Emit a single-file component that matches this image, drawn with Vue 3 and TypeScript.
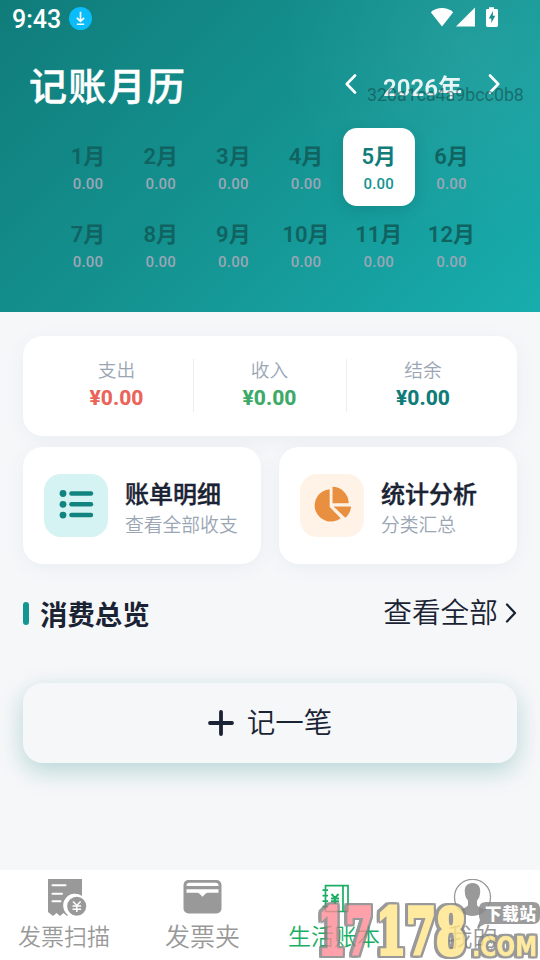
<script setup lang="ts">
interface Month {
  label: string
  amount: string
}

interface Total {
  label: string
  value: string
  tone: 'expense' | 'income' | 'balance'
}

const selected = 5
const months: Month[] = Array.from({ length: 12 }, (_, i) => ({
  label: `${i + 1}月`,
  amount: '0.00',
}))

const totals: Total[] = [
  { label: '支出', value: '¥0.00', tone: 'expense' },
  { label: '收入', value: '¥0.00', tone: 'income' },
  { label: '结余', value: '¥0.00', tone: 'balance' },
]
</script>

<template>
  <div class="screen">
    <header class="hero">
      <div class="status">
        <span class="clock">9:43</span>
        <svg class="download" viewBox="0 0 24 24">
          <circle cx="12" cy="12" r="12" fill="#0bbcfb" />
          <path d="M12 5v10M8.2 11.3 12 15l3.8-3.7M8.2 18h7.6" fill="none" stroke="#fff" stroke-width="1.7" />
        </svg>
        <svg class="signals" viewBox="0 0 70 22" fill="#fff">
          <path d="M.8 5.2C7.400-.4 16.600-.4 23.200 5.200L12 19.600Z" />
          <path d="M26 19.500 45 .6v18.900Z" />
          <path d="M59 .2h5v1.700h2.600a1.400 1.400 0 0 1 1.400 1.400v15.300a1.400 1.400 0 0 1-1.400 1.400H57.400a1.400 1.400 0 0 1-1.400-1.400V3.300A1.400 1.400 0 0 1 57.400 1.900H59Z" />
          <path d="m63 4-4.200 7.500h2.500V16l4-7.200h-2.500Z" fill="#188e8d" />
        </svg>
      </div>
      <div class="heading">
        <h1>记账月历</h1>
        <div class="year">
          <svg class="arrow" viewBox="0 0 12 20"><path d="m10 1.500-8.200 8.500 8.200 8.500" /></svg>
          <span class="year-label">2026年</span>
          <svg class="arrow" viewBox="0 0 12 20"><path d="m2 1.500 8.200 8.500L2 18.500" /></svg>
          <span class="device-id">320a1ca4a9bcc0b8</span>
        </div>
      </div>
      <div class="months">
        <div v-for="(m, i) in months" :key="m.label" class="month" :class="{ active: i + 1 === selected }">
          <span class="month-name">{{ m.label }}</span>
          <span class="month-amount">{{ m.amount }}</span>
        </div>
      </div>
    </header>

    <main class="content">
      <section class="totals card">
        <div v-for="t in totals" :key="t.label" class="total">
          <span class="total-label">{{ t.label }}</span>
          <span class="total-value" :class="t.tone">{{ t.value }}</span>
        </div>
      </section>

      <section class="shortcuts">
        <div class="shortcut card">
          <div class="tile mint">
            <svg viewBox="0 0 64 64" fill="#128480">
              <circle cx="19" cy="19.500" r="3.400" />
              <circle cx="19" cy="30.300" r="3.400" />
              <circle cx="19" cy="41.100" r="3.400" />
              <rect x="25.200" y="17.200" width="24" height="4.500" rx="2.200" />
              <rect x="25.200" y="28" width="24" height="4.500" rx="2.200" />
              <rect x="25.200" y="38.800" width="24" height="4.500" rx="2.200" />
            </svg>
          </div>
          <div class="shortcut-text">
            <b>账单明细</b>
            <span>查看全部收支</span>
          </div>
        </div>
        <div class="shortcut card">
          <div class="tile peach">
            <svg viewBox="0 0 64 64" fill="#e89040">
              <path d="M29.700 15.200V33L40.700 44.200A16.200 16.200 0 1 1 29.700 15.200Z" />
              <path d="M32.500 12.800A16.300 16.300 0 0 1 48.700 29.200H32.500Z" />
              <path d="M33.500 32.400H51A16 16 0 0 1 45.300 43.800Z" />
            </svg>
          </div>
          <div class="shortcut-text">
            <b>统计分析</b>
            <span>分类汇总</span>
          </div>
        </div>
      </section>

      <section class="overview">
        <h2><span>消费总览</span></h2>
        <div class="more">
          <span>查看全部</span>
          <svg viewBox="0 0 12 20"><path d="m2 1.500 8 8.500-8 8.500" /></svg>
        </div>
      </section>

      <div class="add">
        <svg viewBox="0 0 26 26"><path d="M13 2v22M2 13h22" /></svg>
        <span>记一笔</span>
      </div>
    </main>

    <nav class="tabs">
      <div class="tab long">
        <svg viewBox="0 0 42 38">
          <path d="M1 0h34v17a10.500 10.500 0 0 0-14 19l-1 1-3.500-3-3.500 3-3.500-3L6 37l-5-4Z" fill="#999" />
          <path d="M5.500 6.300h13M5.500 14.800h9.500M5.500 22.300h8" fill="none" stroke="#fff" stroke-width="2" stroke-linecap="round" />
          <circle cx="29.700" cy="27.300" r="9.500" fill="#999" />
          <path d="m26 22.500 3.800 4 3.800-4M25.500 27h8.600M25.500 30.200h8.600M29.800 27v6" fill="none" stroke="#fff" stroke-width="1.500" />
        </svg>
        <span>发票扫描</span>
      </div>
      <div class="tab">
        <svg viewBox="0 0 42 38">
          <rect x="1.500" y="1" width="38" height="33.500" rx="5" fill="#999" />
          <path d="M4.500 7V6.500q0-2.700 3-2.700h26q3 0 3 2.700V7ZM4.500 10.300h32v3.500H25.500q-1.500 0-2.500 1.500L20.500 17.700l-2.500-2.400q-1-1.500-2.500-1.500h-11Z" fill="#fff" />
        </svg>
        <span>发票夹</span>
      </div>
      <div class="tab long current">
        <svg viewBox="0 0 42 38" fill="none" stroke="#1aae64" stroke-width="1.700">
          <path d="M8.500 6.700h22.500v25.800h-22.500ZM26 6.700v25.800M5.500 11.200h5.500M5.500 16.700h5.500M5.500 22.200h5.500M5.500 27.700h5.500" />
          <path d="m14.500 15 3.500 4 3.500-4M14 19.500h8M14 22.300h8M18 19v6" stroke-width="1.900" />
        </svg>
        <span>生活账本</span>
      </div>
      <div class="tab">
        <svg viewBox="0 0 42 38">
          <circle cx="20.500" cy="18.300" r="18" fill="#fff" stroke="#999" stroke-width="1.300" />
          <path d="M20.500 4c5.500 0 8 3.500 7.700 9-.2 4-1.500 7-3.200 8.500v4.500q1 2.500 8.500 4.700Q27.500 36.300 20.500 36.300T7.500 30.700q7.500-2.200 8.500-4.700v-4.500c-1.700-1.500-3-4.500-3.200-8.500C12.500 7.500 15 4 20.500 4Z" fill="#999" />
        </svg>
        <span>我的</span>
      </div>
    </nav>

    <svg class="stamp" viewBox="0 0 226 62">
      <g class="digits">
        <text class="pink" x="4" y="56" textLength="55" lengthAdjust="spacingAndGlyphs">17</text>
        <text class="yellow" x="62" y="56" textLength="90" lengthAdjust="spacingAndGlyphs">178</text>
      </g>
      <g class="domain">
        <text class="yellow" x="158" y="58" textLength="65" lengthAdjust="spacingAndGlyphs">.COM</text>
      </g>
      <path class="bubble" d="M172 4h47q7 0 7 7v8q0 7-7 7h-48l-8 4 3-8q-1-2-1-4v-7q0-7 7-7Z" />
      <text class="site" x="171" y="22" textLength="51">下载站</text>
    </svg>
  </div>
</template>

<style>
body {
  margin: 0;
}
</style>

<style scoped>
.screen {
  position: relative;
  display: flex;
  flex-direction: column;
  width: 540px;
  height: 960px;
  overflow: hidden;
  background: #f6f7f9;
  color: #1a2333;
  font-family: Roboto, "Noto Sans CJK SC", sans-serif;
}
svg {
  display: block;
  flex: none;
}
.hero {
  box-sizing: border-box;
  height: 312px;
  flex: none;
  background:
    radial-gradient(circle at 470px 50px, rgba(255, 255, 255, 0.06), transparent 190px),
    linear-gradient(135deg, #107c7a 0%, #149391 50%, #18adae 100%);
}
.status {
  display: flex;
  align-items: center;
  height: 38px;
  padding: 0 40px 0 12px;
  color: #fff;
}
.clock {
  font-size: 25px;
  font-weight: 500;
}
.download {
  width: 23px;
  height: 23px;
  margin: -1px 0 0 8px;
}
.signals {
  width: 70px;
  height: 22px;
  margin: -2px 0 0 auto;
}
.heading {
  display: flex;
  align-items: center;
  justify-content: space-between;
  height: 90px;
  padding: 0 40px 0 29px;
}
h1 {
  margin: 8px 0 0;
  color: #fff;
  font-size: 38px;
  font-weight: 500;
  line-height: 48px;
  letter-spacing: 1.3px;
  -webkit-text-stroke: 0.5px #fff;
}
.year {
  position: relative;
  display: flex;
  align-items: center;
  width: 155px;
  margin-top: 2px;
  justify-content: space-between;
  color: #fff;
}
.year-label {
  margin-top: 7px;
  font-size: 24px;
  font-weight: 600;
  line-height: 32px;
  opacity: 0.9;
}
.arrow {
  width: 12px;
  height: 20px;
}
.arrow path {
  fill: none;
  stroke: #fff;
  stroke-width: 2.6;
  stroke-linecap: round;
  stroke-linejoin: round;
}
.device-id {
  position: absolute;
  left: 22px;
  top: 19px;
  color: rgba(20, 65, 65, 0.55);
  font-size: 17.800px;
  line-height: 22px;
  white-space: nowrap;
}
.months {
  display: grid;
  grid-template-columns: repeat(6, 72px);
  grid-auto-rows: 77.500px;
  column-gap: 0.7px;
  padding-left: 52px;
}
.month {
  display: flex;
  flex-direction: column;
  align-items: center;
  box-sizing: border-box;
  padding-top: 13px;
  border-radius: 14px;
}
.month-name {
  color: #106361;
  font-size: 22px;
  font-weight: 600;
  line-height: 32px;
}
.month-amount {
  margin-top: 1px;
  color: #9ba6b5;
  font-size: 15px;
  font-weight: 500;
  line-height: 20px;
  letter-spacing: 0.2px;
}
.active {
  background: #fff;
  box-shadow: 0 4px 14px rgba(0, 60, 60, 0.16);
}
.active .month-name {
  color: #107d7a;
}
.active .month-amount {
  color: #149391;
}
.content {
  flex: 1;
  padding: 23.500px 23px 0;
}
.card {
  border-radius: 20px;
  background: #fff;
  box-shadow: 0 4px 20px rgba(16, 100, 130, 0.055);
}
.totals {
  display: grid;
  grid-template-columns: repeat(3, 153px);
  justify-content: center;
  align-items: center;
  height: 100px;
}
.total {
  display: flex;
  flex-direction: column;
  align-items: center;
  box-sizing: border-box;
  height: 53px;
}
.total:not(:last-child) {
  border-right: 1px solid #eceff1;
}
.total-label {
  margin-top: -2px;
  color: #9ba6b5;
  font-size: 18.700px;
  font-weight: 350;
  line-height: 28px;
}
.total-value {
  margin-top: -1px;
  font-size: 21px;
  font-weight: 800;
  line-height: 28px;
}
.expense {
  color: #eb6359;
}
.income {
  color: #3daa69;
}
.balance {
  color: #107c7a;
}
.shortcuts {
  display: grid;
  grid-template-columns: 1fr 1fr;
  gap: 18px;
  margin-top: 11.500px;
}
.shortcut {
  display: flex;
  align-items: center;
  box-sizing: border-box;
  height: 117px;
  padding-left: 21px;
}
.tile {
  width: 64px;
  height: 63px;
  border-radius: 17px;
  overflow: hidden;
}
.mint {
  background: #d4f3f2;
}
.peach {
  background: #fff3e8;
}
.shortcut-text {
  display: flex;
  flex-direction: column;
  margin: 9px 0 0 17px;
}
.shortcut-text b {
  font-size: 24px;
  font-weight: 500;
  line-height: 31px;
  -webkit-text-stroke: 0.4px #1a2333;
}
.shortcut-text span {
  color: #9ba6b5;
  font-size: 18.800px;
  font-weight: 350;
  line-height: 30px;
}
.overview {
  display: flex;
  align-items: center;
  justify-content: space-between;
  height: 44px;
  margin-top: 27px;
}
h2 {
  display: flex;
  align-items: center;
  gap: 12px;
  margin: 0;
  font-size: 27.400px;
  font-weight: 700;
  line-height: 36px;
}
h2::before {
  content: "";
  width: 6px;
  height: 23px;
  border-radius: 3px;
  background: #149693;
}
h2 span {
  margin: 5px 0 0 -1px;
}
.more {
  display: flex;
  align-items: center;
  gap: 7px;
  font-size: 28.700px;
  font-weight: 350;
  line-height: 40px;
}
.more svg {
  width: 12px;
  height: 20px;
}
.more path {
  fill: none;
  stroke: #1a2333;
  stroke-width: 2.300;
  stroke-linecap: round;
  stroke-linejoin: round;
}
.add {
  display: flex;
  align-items: center;
  justify-content: center;
  gap: 13px;
  height: 80px;
  margin-top: 48px;
  border-radius: 20px;
  background: #f6f7f9;
  box-shadow: 0 8px 24px rgba(16, 124, 122, 0.27);
  font-size: 28.500px;
  font-weight: 350;
}
.add span {
  margin-top: -6px;
}
.add svg {
  width: 26px;
  height: 26px;
}
.add path {
  fill: none;
  stroke: #1a2333;
  stroke-width: 3.800;
  stroke-linecap: round;
}
.tabs {
  display: grid;
  grid-template-columns: repeat(4, 135px);
  height: 90px;
  flex: none;
  background: #fff;
  color: #999;
}
.tab {
  display: flex;
  flex-direction: column;
  align-items: center;
  padding-top: 9px;
  font-size: 25px;
  font-weight: 350;
  line-height: 36px;
}
.tab svg {
  width: 42px;
  height: 38px;
}
.tab span {
  margin-top: 3px;
}
.long span {
  margin-right: 7px;
  font-size: 23px;
}
.current {
  color: #1aae64;
}
.stamp {
  position: absolute;
  left: 314px;
  top: 898px;
  width: 226px;
  height: 62px;
}
.digits,
.domain {
  opacity: 0.8;
  filter: drop-shadow(2.500px 0 0 #808080) drop-shadow(-2.500px 0 0 #808080) drop-shadow(0 2px 0 #808080) drop-shadow(0 -2px 0 #808080);
}
.digits text {
  font-family: "DejaVu Serif", serif;
  font-size: 64px;
  font-weight: 700;
  stroke-width: 4px;
}
.domain text {
  font-family: "DejaVu Sans", sans-serif;
  font-size: 27px;
  font-weight: 700;
  stroke-width: 0.5px;
}
.pink {
  fill: #ff8a95;
  stroke: #ff8a95;
}
.yellow {
  fill: #ffe589;
  stroke: #ffe589;
}
.bubble {
  fill: #8a8a8a;
  opacity: 0.85;
}
.site {
  font-family: "Noto Sans CJK SC", sans-serif;
  font-size: 16.500px;
  font-weight: 900;
  fill: #fff;
}
</style>
